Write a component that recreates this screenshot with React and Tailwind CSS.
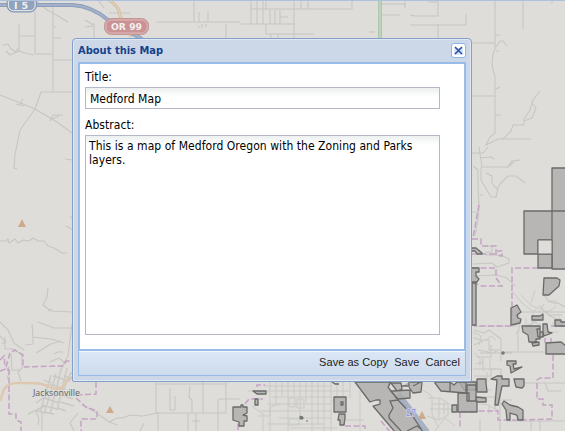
const minorRoads = [
  // north-west
  'M53 5V92M35 0L46 9L68 22M53 27h3M53 38h8M53 60h20M41 92h32L41 92L35 109L20 130L17 145',
  'M35 11V54M35 54h17M19 24V51M19 36h16M19 51L25 53L34 55',
  'M3 45l5-1l3 5l5 3l2-4M6 51l4 4l4-2l6-2M0 95L18 102L35 109L57 122L72 133',
  'M16 104l8 2M20 104l3-5M50 121l3-6h10M52 119l7-3M17 145l-2 9l-1 14l3 1M65 159l7 1',
  'M98 0L104 8M109 13h21M85 20l5 3l3 2M85 27l8-1M94 23V38M156 22H240M241 24h54',
  // north-centre
  'M194 0V22M199 12V22M208 12V22M199 26V28M202 24V28M206 24v3M226 38V24M251 0V24M257 0V24M263 0V24M266 0V9M251 9H352V0M270 10V24M275 10V24M280 10V24M280 17h8',
  'M294 0V38M301 0v9M308 0v9M266 24v10h48M271 34v4M278 34v4M369 32h6',
  // north-east
  'M380 4h26M405 0v8M381 15h19M410 15l5 1h23V0M410 25h56V14M428 2h10M438 24V38M523 0V29M552 0V4',
  'M495 0V49L493 54L492 65L495 77V133L490 137L486 145L498 139h33M472 43h23M472 96h23M495 115h6M495 35h5M496 51h3M496 47l4-6h3l4 5M496 89l4-2',
  'M503 139l8-8l2-6h11v-6l6-9l3-10l7-9M532 103l4 5l-4 10l-8 3',
  // west
  'M0 241l6 0l2-2l1 4l6-4l3 4l5-3l6 1l4-3l5 3l6 0l4 5l6 2l8 5l5 0M66 226l7 4M71 216v3M48 288l-1 9l-4 8l8 6l21 1M48 311l4-2M38 322l16 6h19M25 345l8-1v-7l-1-13M33 337l18 2l13 4M36 353l15-9l10-3M0 322l8 8l6 13l10 7M5 337l0 12l8 0l9 6l0 13l-4 4l3 9M72 324L68 356L62 366',
  'M11 354l1 16h8M54 354l4-2h5M50 362l9-4l7 6M10 371l-3 8M44 380l7 3M70 374l12-1l8 4M0 336l6 6M2 344l4-3M82 405l13 7l14 10l8 3M109 422l8-4h6l7-3l12 1l16-3M78 413l-8 10l4 8M42 412l0 19M35 410l4 8l-1 7',
  // south-west blocks
  'M156 382V413h70V382M156 384h70M158 413v18M170 388v22M175 396v14h-5M203 382v31M190 386l-1 11l3 3v12M188 413v18M192 421h8M196 413v18M218 431V401q0-2 2-2h20M157 413l20 0M140 431l4-8M209 413h9',
  // east
  'M472 153h11l5-6M479 147l3 20h26l4-6l8-1M481 167v13l10 17l5 0l2-8M486 173l6 3v7l5 6l3-5l8-8h8l9 7M508 167l6-5M473 166l5 4v16l1 20l-1 14l-3 15M480 158l11-1l3 2M480 195h3M472 212l7 0',
  'M473 264l19-1l5 4l12-4l0-4l-8-4l-15 0M484 246h8v6h-7M473 276l24-1l10 3l8 8',
  // eastern town streets
  'M474 326h42V312h49M474 330l10 3l5-3l12 9v22M474 338l8 2l7 0v10h12M474 345l9-4M478 350l15 3l4-2M477 357h14v-12M483 358v13M473 369l28 0l0 20M474 376h17v-7M502 352h43M480 353h32M524 383h22M502 400h10',
  'M545 383l3 8h13M546 383h19M519 312v18l-3 4M518 330v21M539 306l11 10l15 7M543 292l5 9l8 3M549 301l5 0l11 6M548 315h14M541 318l-8 5l-6 3',
  'M475 397h20v15M500 389v42M508 421h57M531 420v11M540 421v10M480 420v11',
];

const shapes = [
  'M552 168h14v101h-14zM524 211h28v29h-14v14h-14zM552 211h14',
  'M538 254h14v14h-14z',
  'M544 278l13 0l3 2l-1 6l-10 9h-6z',
  'M472 248l4 0l6 5l0 1h-5l-2-3h-3M472 268h7v4h-3v4l3 3l-2 3h-5M472 283h4v42h-4z',
  'M511 308L517 305L521 312L517 315L518 318L521 319L520 323L511 325z',
  'M532 316h8l3-2v6h-11zM555 320h6v2h5v4h-11z',
  'M522 326h18v13h-4v3h-7l-1-7l-5-3zM537 329h3v3h3v5h-5zM543 324h4l1 8l4 1l-8 3l-1-4zM532 343l7-1v3l-6 1z',
  'M546 343l15-1l5 4v8h-20z',
  'M507 361h9v3h-3l1 5l8-2l-11 6l-1-7l-3-1z',
  'M491 379l6-3h5v3h7v7h-7l-4 19h-3l2-25z',
  'M514 379h10v7l-2 2l-6-1l-1-4z',
  'M502 404l2-3l6 4l8 2l5 3v10h-5l-1-5l-7-2v7h-3l-1-10z',
  'M459 382h17v8h-12l-3-5zM477 379h9v4l1 9h-10zM476 397l10 1v4h-10z',
  'M467 385h9v16h-9zM458 393h11v8h8v11l-19 0z',
  'M435 383l6 8l25 2v-11h-9l-3 3l-4-3h-15zM450 382v9',
  'M393 391l17-1v8l-12 1l-8-8zM391 383l6 8l5-2l-1-6h-12v3M402 386h7v-4M410 382h12l-1 10l-8 1l-4-6M413 386l8-4',
  'M355 382L370 402L376 400h4v4l-7 2L395 432H423L412 415L398 400L388 387L391 382z',
  'M334 397h12v15h-12zM341 402h2v3h-2zM339 414h6v4l-1 7h-4v-5h-2z',
  'M233 407h8v-2h2v2h4v6l-4 2l4 1v5l-3 0v5h-5v-4l-6-2zM253 391h13v3h-9zM255 399h3v6h-3z',
  'M452 405h5v7h-5zM332 382l3 2h4',
];

function CityGrid() {
  return (
    <g stroke="#c9c9c5" strokeWidth="1" fill="none">
      <path d="M270 382V431M276 382V404M282 382V396M288 382V431M294 382V396M300 382V420M306 382V402M312 382V431M318 382V425M324 382V431M331 382V431M337 382V396M343 382V396M350 382V398M360 391V431" />
      <path d="M248 391H275M264 386H332M276 391H350M272 397H332M267 404H331M260 411H331M279 418H331M267 424H324M290 428H337M331 401H334M346 420h18" />
      <path d="M252 406l11 8v17M258 416h12v-9l10-3M289 398h6v9h-6zM297 399h7v9h-7zM289 419h10v6h-10z" />
      <path d="M428 398h12l8 5v12l-9 5l-12-4M423 390l9 6v18l6 13M439 398v22M450 404h-18M430 409h22M444 402v12M435 431l10-13l10 8" />
      <path d="M473 332l8 4l-2 9M486 340l5-4l5 4M474 353l6 5v8M490 359v10h7M476 364l7-2M487 372v7M474 390h18M479 404l10 1v9M489 406l9 4" />
      <path d="M51 375L40 412M56 374L44 414M62 366L50 414M67 368L57 410M71 372L63 390M53 376l17 5M50 384l16 5M48 391l16 5M45 398l14 5M42 405l15 4M37 411l17 3M64 376l8 3M62 395l11 4M60 402l14 4M58 408l8 3M36 403l10-7M28 414l17-8" strokeWidth="1.4" />
      <path d="M536 309l-5 8M544 304l-5 9M556 306q-6 7-13 5M552 324l8-7M531 321l10 4M548 332h10M526 326v-8M521 295l10 10l8 4M511 290l12 14l10 7M535 290l-4 13" />
    </g>
  );
}

function MapCanvas() {
  return (
    <svg className="col-start-1 row-start-1 block" width="565" height="431" viewBox="0 0 565 431" fill="none">
      <rect width="565" height="431" fill="#deddd9" />
      <g stroke="#c6c6c3" strokeWidth="1.1" strokeLinejoin="round">
        {minorRoads.map((d) => (
          <path key={d} d={d} />
        ))}
      </g>
      <CityGrid />
      <path d="M380 0V38" stroke="#aec4ac" strokeWidth="4" />
      <path d="M380 0V38" stroke="#bdd3ba" strokeWidth="2.4" />
      <path d="M108 -1q12 8 12 17l8 12l3 9" stroke="#c6b7a0" strokeWidth="3" />
      <path d="M108 -1q12 8 12 17l8 12l3 9" stroke="#e4ceb1" strokeWidth="2" />
      <path d="M0 401l4-12q5-7 17-6q14 0 21 1l14 5h6q2-7 10-12" stroke="#ddc8af" strokeWidth="2.4" />
      <path d="M0 5H72Q92 6 108 20L142 39" stroke="#8d9fba" strokeWidth="4" />
      <path d="M0 5H72Q92 6 108 20L142 39" stroke="#a2b1c9" strokeWidth="2.2" />
      <path d="M398 394L427 432" stroke="#a6b1c4" strokeWidth="6" />
      <g stroke="#c5a3c3" strokeWidth="1.5" strokeDasharray="6 2.5">
        <path d="M0 371l8-3l0 3M0 360l4-4l1 10M6 367l4-14l5-3l8 5v12l32-1h8l3-5h7M9 369v45h7v6l5 2v9M96 382v12l-19 1M76 398l10 9l11 4v8H81v12" />
        <path d="M479 205l-6 33M472 239h9v7h15v9l6 1v-5h-5M472 254h25M472 268h24v10l6 8h-22l-6-4" />
        <path d="M538 268H512V326H474M551 326h14M553 355v23H540l-3 2v19h6v6h9v14l-30 1h-24v-9H460v17M345 426h20v5M238 424v7M245 404l4-5h14M257 387v-2h8M545 338v5M551 338v5" />
        <path d="M381 421l10 12" />
      </g>
      <g fill="#acacab" fillOpacity=".8" stroke="#6a6b69" strokeWidth="1.3" strokeLinejoin="round">
        {shapes.map((d) => (
          <path key={d} d={d} />
        ))}
      </g>
      <path d="M398 400l-8 1l3 7l-4 7v3l12 13M407 431l10-5l4 3" stroke="#6a6b69" strokeWidth="1.3" />
      <path d="M538 240h14v14h-14z" fill="#deddd9" stroke="#6a6b69" />
      <circle cx="503" cy="353" r="1.8" fill="#777775" />
      <path d="M300 416l3 1v2h-3zM306 421h2" fill="#777775" stroke="#777775" strokeWidth="1" />
      <g fill="#cdaa8a">
        <path d="M22 219l4 8h-8z" />
        <path d="M110 406l4 7h-8z" />
        <path d="M422 411l4 8h-8z" />
      </g>
      <g stroke="#8296b1">
        <rect x="7" y="-4" width="29.5" height="16" rx="6.5" fill="#a2b1c9" />
        <rect x="8.5" y="-3" width="26.5" height="13.6" rx="5" stroke="#e6e9eb" fill="#91a2bd" />
      </g>
      <rect x="104.5" y="18.5" width="44" height="16" rx="7" fill="#d29da0" stroke="#c39696" />
      <rect x="106" y="20" width="41" height="13" rx="5.5" fill="#cb9296" stroke="#ddb7b7" />
      <g fontFamily="'DejaVu Sans', sans-serif" fontSize="9.5" fontWeight="bold" fill="#f1f0ed">
        <text x="14" y="9" textLength="14">I 5</text>
        <text x="111" y="30" textLength="31" lengthAdjust="spacingAndGlyphs">OR 99</text>
      </g>
      <text x="33" y="396" textLength="47" lengthAdjust="spacingAndGlyphs" fontFamily="'Open Sans', sans-serif" fontSize="9" fill="#5f5f5d" stroke="#deddd9" strokeWidth="1.5" paintOrder="stroke">Jacksonville</text>
      <text x="406" y="416" fontFamily="'DejaVu Sans', sans-serif" fontSize="8" fill="#8f8de6" stroke="#d5d4e0" strokeWidth="1.5" paintOrder="stroke">27</text>
      <path d="M0 .5H565" stroke="#adc1df" />
    </svg>
  );
}

function CloseButton() {
  return (
    <button aria-label="Close" className="mt-[4px] flex size-[15px] items-center justify-center rounded-[3px] border border-[#8db5e9] bg-white">
      <svg width="11" height="11" viewBox="0 0 11 11">
        <path d="M1 3h9v7H1z" fill="#d5e5fb" />
        <path d="M2 2L9 9M9 2L2 9" stroke="#2f4f9f" strokeWidth="1.6" />
      </svg>
    </button>
  );
}

function AboutDialog() {
  return (
    <section className="z-10 col-start-1 row-start-1 mt-[38px] ml-[72px] flex h-[344px] w-[400px] flex-col rounded-t-[4px] rounded-b-[2px] border border-[#829fc9] bg-[#ccd8e8] px-[5px] pb-[5px] shadow-[inset_0_0_0_1px_#dfe8f3]">
      <header className="flex h-[23px] shrink-0 justify-between">
        <h1 className="pt-[4px] font-['DejaVu_Sans_Condensed','DejaVu_Sans',sans-serif] text-[11px] leading-[15px] font-bold tracking-[0.02px] whitespace-nowrap text-[#15428b]">About this Map</h1>
        <CloseButton />
      </header>
      <div className="flex h-[289px] shrink-0 flex-col border-2 border-[#99bbe8] bg-white px-[5px] pt-[5px] font-['DejaVu_Sans_Condensed','DejaVu_Sans',sans-serif] text-[12px] leading-[14px] text-black">
        <label className="h-[18px] pt-px tracking-[0.05px]">Title:</label>
        <input className="h-[22px] w-[355px] border border-[#b5b8c8] bg-[linear-gradient(#edf0f0,#fff_9px)] px-[4px] pt-px tracking-[0.05px] outline-none" defaultValue="Medford Map" />
        <label className="mt-[9px] h-[17px] tracking-[0.05px]">Abstract:</label>
        <textarea className="h-[200px] w-[355px] resize-none border border-[#b5b8c8] bg-[linear-gradient(#edf0f0,#fff_9px)] px-[3px] pt-[3px] leading-[14px] tracking-[0.05px] outline-none" defaultValue="This is a map of Medford Oregon with the Zoning and Parks layers." />
      </div>
      <footer className="flex h-[25px] shrink-0 items-start justify-end gap-[6px] border border-t-0 border-[#99bbe8] bg-linear-to-b from-[#dce7f5] to-[#cddbee] pt-[4px] pr-[5px] font-['Liberation_Sans',sans-serif] text-[11px] leading-[14px] tracking-[0.05px] text-[#222] shadow-[inset_0_1px_0_#f4f8fd]">
        <button>Save as Copy</button>
        <button>Save</button>
        <button>Cancel</button>
      </footer>
    </section>
  );
}

export default function App() {
  return (
    <main className="grid h-[431px] w-[565px] overflow-hidden bg-[#deddd9]">
      <MapCanvas />
      <AboutDialog />
    </main>
  );
}
